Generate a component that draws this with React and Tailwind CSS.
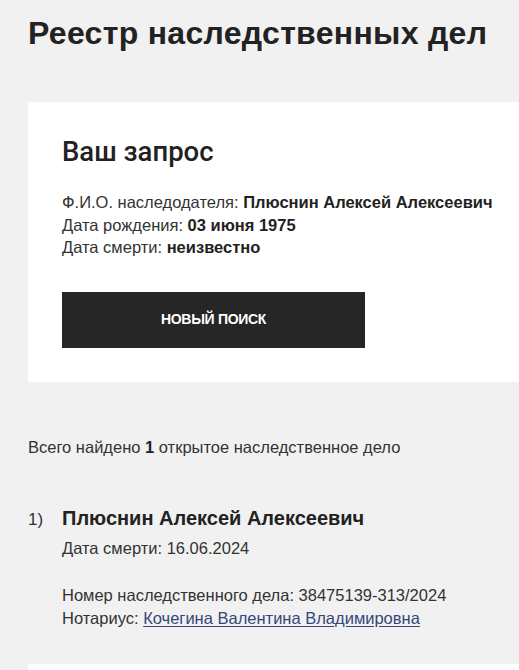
export default function App() {
  return (
    <div className="h-screen bg-[#f1f1f1] text-[#222] font-['Liberation_Sans',Arial,sans-serif] overflow-hidden">
      <div className="pl-[28px]">
        <h1 className="pt-[13px] text-[32px] leading-[40px] font-bold text-[#222] tracking-[0.3px]">
          Реестр наследственных дел
        </h1>

        {/* Query card */}
        <div className="mt-[49px] bg-white pl-[34px] pt-[33px] pb-[34px] w-[520px]">
          <h2 className="text-[27.5px] leading-[34px] font-medium font-['Roboto',Arial,sans-serif] text-[#222]">Ваш запрос</h2>
          <div className="mt-[22px] text-[16.5px] leading-[22.5px] text-[#333]">
            <p>
              Ф.И.О. наследодателя: <b className="text-[#222]">Плюснин Алексей Алексеевич</b>
            </p>
            <p>
              Дата рождения: <b className="text-[#222]">03 июня 1975</b>
            </p>
            <p>
              Дата смерти: <b className="text-[#222]">неизвестно</b>
            </p>
          </div>
          <button className="mt-[33px] w-[303px] h-[56px] bg-[#262626] text-white text-[14px] tracking-[-0.3px] font-bold uppercase">
            Новый поиск
          </button>
        </div>

        <p className="mt-[53px] text-[16.5px] leading-[24px] text-[#333]">
          Всего найдено <b className="text-[#222]">1</b> открытое наследственное дело
        </p>

        {/* Result */}
        <div className="mt-[45px] flex items-baseline">
          <span className="w-[34px] text-[17px] leading-[28px] text-[#333]">1)</span>
          <div>
            <h3 className="text-[20px] leading-[28px] font-bold text-[#222]">Плюснин Алексей Алексеевич</h3>
            <p className="mt-[5px] text-[16.5px] leading-[22px] text-[#333]">Дата смерти: 16.06.2024</p>
            <p className="mt-[25px] text-[16.5px] leading-[23px] text-[#333]">
              Номер наследственного дела: 38475139-313/2024
            </p>
            <p className="text-[16.5px] leading-[23px] text-[#333]">
              Нотариус:{' '}
              <a href="#" className="text-[#34477a] underline underline-offset-2">
                Кочегина Валентина Владимировна
              </a>
            </p>
          </div>
        </div>

        <div className="mt-[34px] bg-white h-[40px] w-[520px]"></div>
      </div>
    </div>
  )
}
